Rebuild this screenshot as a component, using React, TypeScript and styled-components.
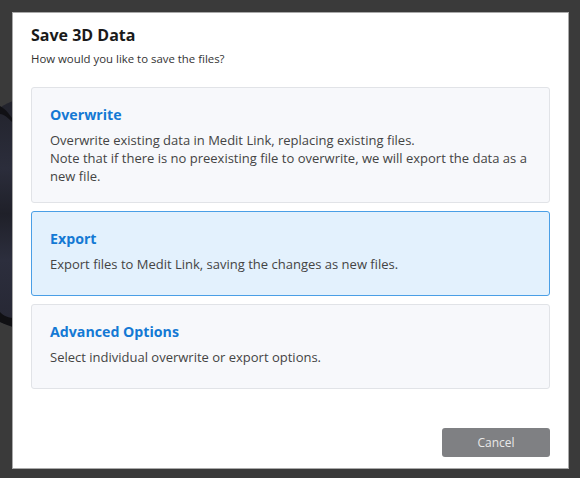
import React from "react";
import styled, { createGlobalStyle } from "styled-components";

const Global = createGlobalStyle`
  html, body { margin: 0; padding: 0; background: #3a3a3a; }
  * { box-sizing: border-box; }
  body { font-family: "Open Sans", "Noto Sans", sans-serif; }
`;

const Viewport = styled.div`
  position: relative;
  width: 580px;
  height: 478px;
  background: #3a3a3a;
  padding: 12px 11px 9px 12px;
  display: flex;
  overflow: hidden;
`;

const Scene = styled.svg`
  position: absolute;
  left: 0;
  top: 0;
`;

const Dialog = styled.div`
  position: relative;
  flex: 1;
  display: flex;
  flex-direction: column;
  background: #ffffff;
  border: 1px solid #a9a9a9;
  padding: 11px 18px 11px 18px;
`;

const Title = styled.h1`
  margin: 0;
  font-size: 16px;
  line-height: 22px;
  font-weight: 700;
  color: #1a1a1a;
`;

const Subtitle = styled.p`
  margin: 5px 0 0;
  font-size: 11.4px;
  line-height: 16px;
  color: #333333;
`;

const OptionList = styled.div`
  margin-top: 20px;
  display: flex;
  flex-direction: column;
  gap: 8px;
`;

const OptionCard = styled.div<{ $selected?: boolean }>`
  min-height: 85px;
  border: 1px solid ${(p) => (p.$selected ? "#4a9fe6" : "#e1e3e7")};
  background: ${(p) => (p.$selected ? "#e3f1fd" : "#f7f8fb")};
  border-radius: 3px;
  padding: 17px 18px;
  cursor: pointer;
`;

const OptionTitle = styled.div`
  font-size: 14.2px;
  line-height: 20px;
  font-weight: 700;
  color: #1479d4;
`;

const OptionText = styled.div`
  margin-top: 6px;
  font-size: 13px;
  line-height: 18px;
  color: #444444;
`;

const Footer = styled.div`
  margin-top: auto;
  display: flex;
  justify-content: flex-end;
`;

const CancelButton = styled.button`
  width: 108px;
  height: 29px;
  border: none;
  border-radius: 3px;
  background: #7f8083;
  color: #e8e8e8;
  font-family: "Open Sans", "Noto Sans", sans-serif;
  font-size: 12px;
  cursor: pointer;
`;

const options = [
  {
    title: "Overwrite",
    text: [
      "Overwrite existing data in Medit Link, replacing existing files.",
      "Note that if there is no preexisting file to overwrite, we will export the data as a new file.",
    ],
  },
  {
    title: "Export",
    text: ["Export files to Medit Link, saving the changes as new files."],
    selected: true,
  },
  {
    title: "Advanced Options",
    text: ["Select individual overwrite or export options."],
  },
];

export default function App() {
  return (
    <>
      <Global />
      <Viewport>
        <Scene width="40" height="478" viewBox="0 0 40 478">
          <defs>
            <linearGradient id="g" x1="0" y1="0" x2="0" y2="1">
              <stop offset="0" stopColor="#22232c" />
              <stop offset="0.3" stopColor="#2b2d3b" />
              <stop offset="0.5" stopColor="#1f2029" />
              <stop offset="0.7" stopColor="#2c2e3d" />
              <stop offset="1" stopColor="#262733" />
            </linearGradient>
          </defs>
          <path d="M0 108 C5 104 10 102 16 100 L16 328 C10 326 4 324 0 322 Z" fill="url(#g)" />
          <path d="M0 106 C4 108 8 112 12 118 L12 122 C8 118 4 114 0 114 Z" fill="#111115" />
          <path d="M0 312 C4 316 8 318 16 318 L16 328 C10 326 4 324 0 322 Z" fill="#101013" />
        </Scene>
        <Dialog>
          <Title>Save 3D Data</Title>
          <Subtitle>How would you like to save the files?</Subtitle>
          <OptionList>
            {options.map((o) => (
              <OptionCard key={o.title} $selected={o.selected}>
                <OptionTitle>{o.title}</OptionTitle>
                <OptionText>
                  {o.text.map((t, i) => (
                    <div key={i}>{t}</div>
                  ))}
                </OptionText>
              </OptionCard>
            ))}
          </OptionList>
          <Footer>
            <CancelButton>Cancel</CancelButton>
          </Footer>
        </Dialog>
      </Viewport>
    </>
  );
}
